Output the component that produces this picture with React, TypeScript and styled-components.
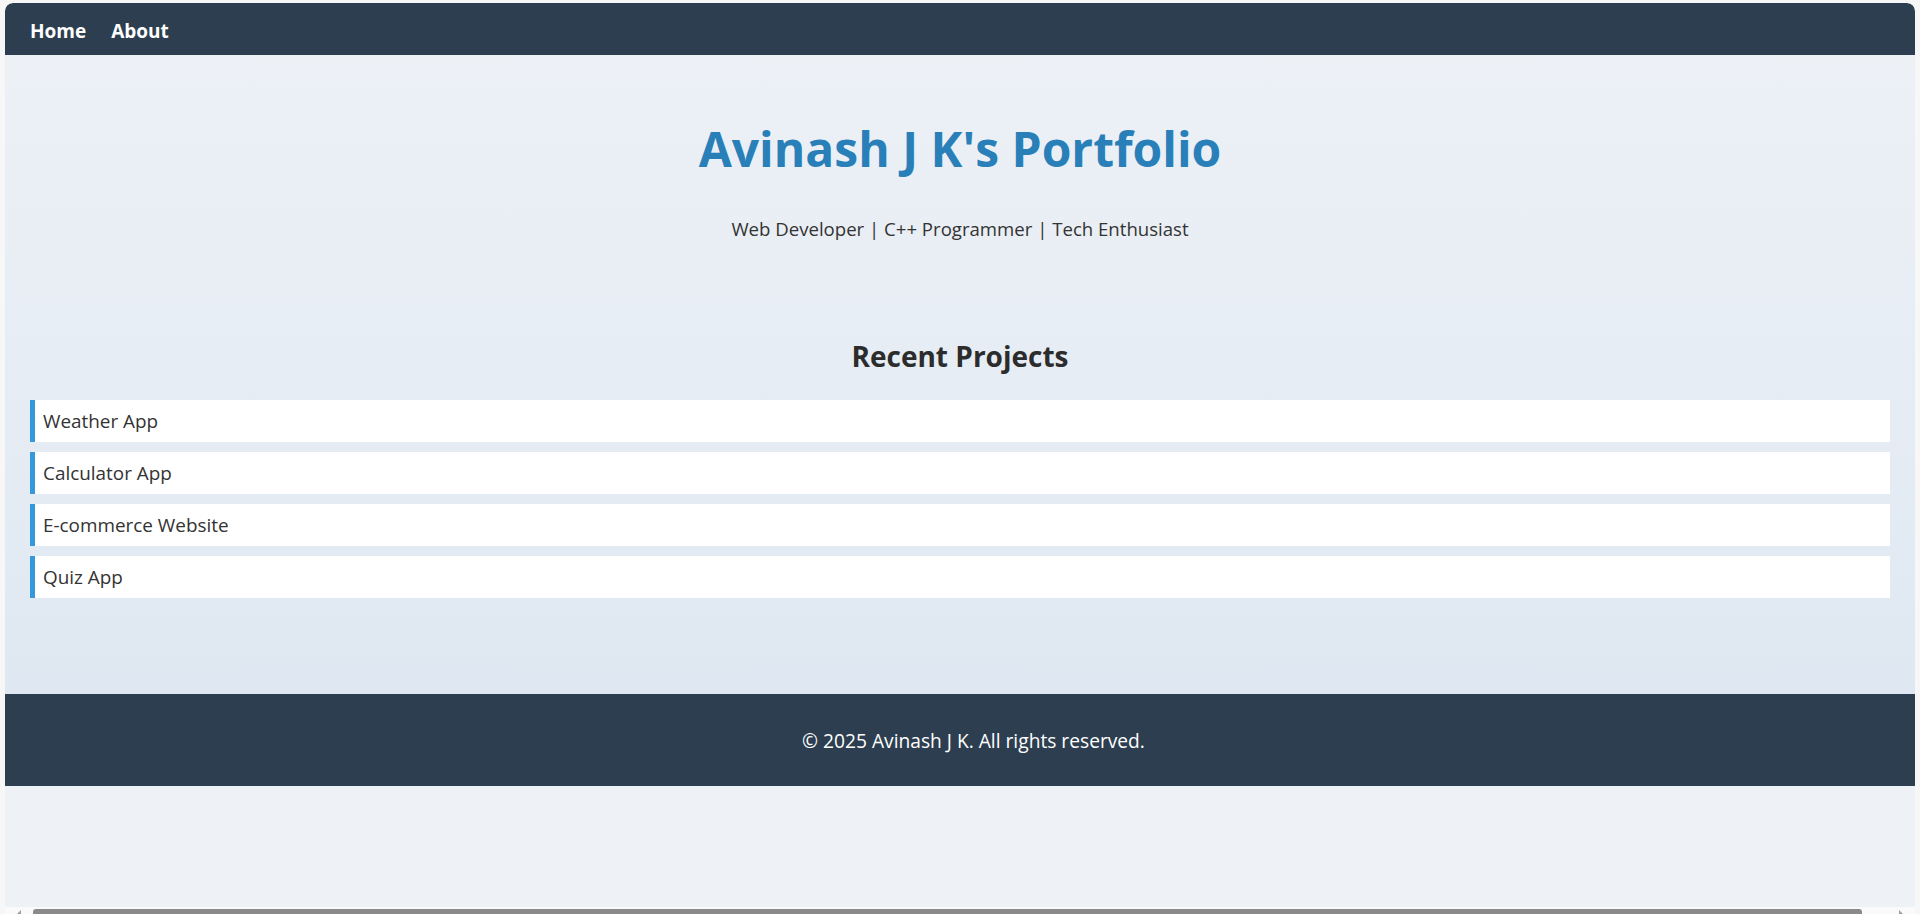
import styled, { createGlobalStyle } from "styled-components";

const projects = ["Weather App", "Calculator App", "E-commerce Website", "Quiz App"];

export default function App() {
  return (
    <>
      <GlobalStyle />
      <Frame>
        <Nav>
          <NavLink href="#">Home</NavLink>
          <NavLink href="#">About</NavLink>
        </Nav>
        <Main>
          <Hero>
            <Title>Avinash J K's Portfolio</Title>
            <Tagline>Web Developer | C++ Programmer | Tech Enthusiast</Tagline>
          </Hero>
          <Projects>
            <SectionTitle>Recent Projects</SectionTitle>
            <ProjectList>
              {projects.map((p) => (
                <ProjectItem key={p}>{p}</ProjectItem>
              ))}
            </ProjectList>
          </Projects>
        </Main>
        <Footer>© 2025 Avinash J K. All rights reserved.</Footer>
        <Filler />
        <ScrollTrack>
          <Arrow $side="left" />
          <ScrollThumb />
          <Arrow $side="right" />
        </ScrollTrack>
      </Frame>
    </>
  );
}

const GlobalStyle = createGlobalStyle`
  html, body {
    margin: 0;
    padding: 0;
    background: #f7f7f7;
    font-family: "Open Sans", "Noto Sans", sans-serif;
    overflow: hidden;
  }
`;

const Frame = styled.div`
  margin: 3px 5px 0 5px;
  height: 911px;
  display: flex;
  flex-direction: column;
  background: #eef2f7;
  border-radius: 8px 8px 0 0;
  overflow: hidden;
`;

const Nav = styled.nav`
  height: 52px;
  flex-shrink: 0;
  box-sizing: border-box;
  background: #2c3e50;
  display: flex;
  align-items: center;
  gap: 25px;
  padding: 3px 25px 0;
  border-radius: 8px 8px 0 0;
`;

const NavLink = styled.a`
  color: #ffffff;
  text-decoration: none;
  font-weight: 700;
  font-size: 19px;
`;

const Main = styled.main`
  height: 639px;
  flex-shrink: 0;
  background: linear-gradient(to bottom, #edf1f6, #dfe8f2);
  padding: 0 25px;
  box-sizing: border-box;
`;

const Hero = styled.section`
  text-align: center;
  padding-top: 65px;
`;

const Title = styled.h1`
  margin: 0;
  color: #2980b9;
  font-size: 48px;
  font-weight: 700;
  line-height: 1.2;
`;

const Tagline = styled.p`
  margin: 38px 0 0;
  color: #333333;
  font-size: 18.6px;
`;

const Projects = styled.section`
  margin-top: 97px;
`;

const SectionTitle = styled.h2`
  margin: 0 0 26px;
  text-align: center;
  color: #2c2c2c;
  font-size: 28px;
  font-weight: 700;
  line-height: 1.3;
`;

const ProjectList = styled.ul`
  list-style: none;
  margin: 0;
  padding: 0;
  display: flex;
  flex-direction: column;
  gap: 10px;
`;

const ProjectItem = styled.li`
  height: 42px;
  display: flex;
  align-items: center;
  box-sizing: border-box;
  background: #ffffff;
  border-left: 5px solid #3498db;
  padding: 1px 0 0 8px;
  color: #333333;
  font-size: 18.9px;
`;

const Footer = styled.footer`
  height: 92px;
  flex-shrink: 0;
  box-sizing: border-box;
  background: #2c3e50;
  color: #ffffff;
  display: flex;
  align-items: center;
  justify-content: center;
  padding-left: 27px;
  font-size: 19.2px;
`;

const Filler = styled.div`
  flex: 1;
  background: #eef2f7;
`;

const ScrollTrack = styled.div`
  height: 7px;
  flex-shrink: 0;
  background: #fafafa;
  padding: 0 12px;
  display: flex;
  align-items: flex-end;
  justify-content: space-between;
  gap: 12px;
`;

const ScrollThumb = styled.div`
  height: 5px;
  flex: 1;
  background: #8a8a8a;
  border-radius: 3px 3px 0 0;
  margin-right: 25px;
`;

const Arrow = styled.div<{ $side: "left" | "right" }>`
  width: 0;
  height: 0;
  border-bottom: 4px solid #a0a0a0;
  border-left: ${(p) => (p.$side === "left" ? "4px solid transparent" : "0")};
  border-right: ${(p) => (p.$side === "right" ? "4px solid transparent" : "0")};
`;
